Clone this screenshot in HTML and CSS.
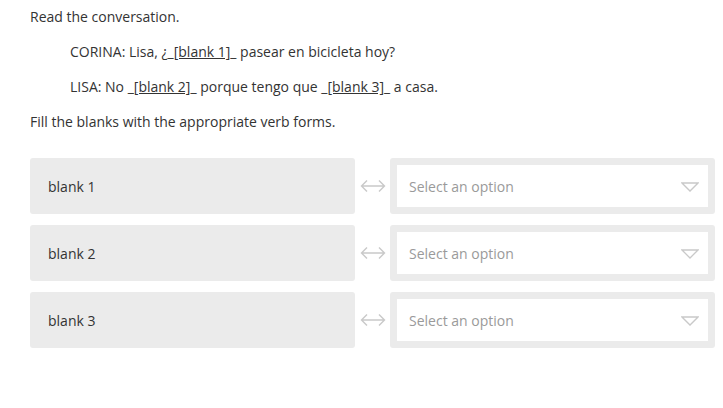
FILE: index.html
```html
<!DOCTYPE html>
<html>
<head>
<meta charset="utf-8">
<link rel="stylesheet" href="styles.css">
</head>
<body>
<div class="page">
  <p class="line">Read the conversation.</p>
  <p class="line indent">CORINA: Lisa, ¿_<span class="blank">[blank 1]</span>_ pasear en bicicleta hoy?</p>
  <p class="line indent">LISA: No _<span class="blank">[blank 2]</span>_ porque tengo que _<span class="blank">[blank 3]</span>_ a casa.</p>
  <p class="line">Fill the blanks with the appropriate verb forms.</p>

  <div class="matches">
    <div class="term">blank 1</div>
    <div class="link"><svg width="26" height="14" viewBox="0 0 26 14"><path d="M1.5 7 H24.5 M7 1.5 L1.5 7 L7 12.5 M19 1.5 L24.5 7 L19 12.5" fill="none" stroke="#c9c9c9" stroke-width="1.4" stroke-linejoin="miter"/></svg></div>
    <div class="choice"><div class="select"><span>Select an option</span><svg width="18" height="10" viewBox="0 0 18 10"><path d="M1 1 H17 L9 9 Z" fill="none" stroke="#c9c9c9" stroke-width="1.3" stroke-linejoin="miter"/></svg></div></div>

    <div class="term">blank 2</div>
    <div class="link"><svg width="26" height="14" viewBox="0 0 26 14"><path d="M1.5 7 H24.5 M7 1.5 L1.5 7 L7 12.5 M19 1.5 L24.5 7 L19 12.5" fill="none" stroke="#c9c9c9" stroke-width="1.4" stroke-linejoin="miter"/></svg></div>
    <div class="choice"><div class="select"><span>Select an option</span><svg width="18" height="10" viewBox="0 0 18 10"><path d="M1 1 H17 L9 9 Z" fill="none" stroke="#c9c9c9" stroke-width="1.3" stroke-linejoin="miter"/></svg></div></div>

    <div class="term">blank 3</div>
    <div class="link"><svg width="26" height="14" viewBox="0 0 26 14"><path d="M1.5 7 H24.5 M7 1.5 L1.5 7 L7 12.5 M19 1.5 L24.5 7 L19 12.5" fill="none" stroke="#c9c9c9" stroke-width="1.4" stroke-linejoin="miter"/></svg></div>
    <div class="choice"><div class="select"><span>Select an option</span><svg width="18" height="10" viewBox="0 0 18 10"><path d="M1 1 H17 L9 9 Z" fill="none" stroke="#c9c9c9" stroke-width="1.3" stroke-linejoin="miter"/></svg></div></div>
  </div>
</div>
</body>
</html>
```

FILE: styles.css
```css
html, body {
  margin: 0;
  padding: 0;
  background: #ffffff;
}
body {
  font-family: "Open Sans", "Liberation Sans", sans-serif;
  font-size: 14px;
  color: #333333;
}
.page {
  padding: 7px 0 0 30px;
}
.line {
  margin: 0 0 15px 0;
  line-height: 20px;
}
.indent {
  padding-left: 40px;
}
.blank {
  text-decoration: underline;
}
.matches {
  display: grid;
  grid-template-columns: 325px 35px 325px;
  grid-auto-rows: 56px;
  row-gap: 11px;
  margin-top: 26px;
}
.term {
  background: #ebebeb;
  border-radius: 3px;
  display: flex;
  align-items: center;
  padding-left: 18px;
}
.link {
  display: flex;
  align-items: center;
  justify-content: center;
  padding-left: 1px;
}
.choice {
  background: #ebebeb;
  border-radius: 3px;
  padding: 7px;
  box-sizing: border-box;
}
.select {
  background: #ffffff;
  height: 100%;
  display: flex;
  align-items: center;
  justify-content: space-between;
  padding: 0 9px 0 12px;
  color: #9a9a9a;
}
.select svg {
  margin-top: 2px;
}
```
